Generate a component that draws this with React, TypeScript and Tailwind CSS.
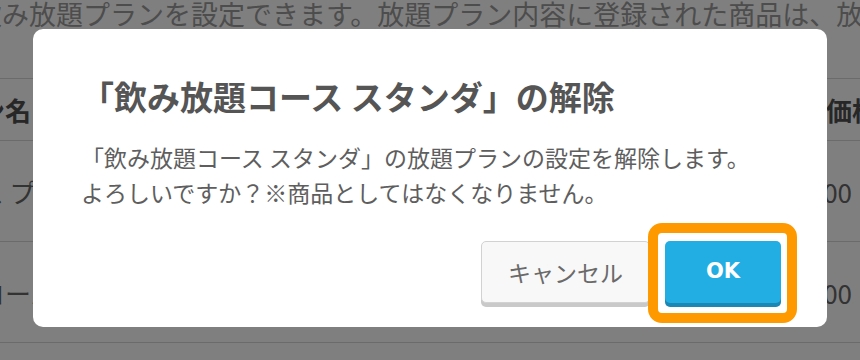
export default function App() {
  const rows = [
    { name: "特選コース プレミアム", price: "3,000" },
    { name: "飲み放題コース スタンダード", price: "2,000" },
  ];
  return (
    <div className="relative w-[860px] h-[360px] overflow-hidden bg-white font-['Noto_Sans_CJK_JP','Noto_Sans',sans-serif]">
      {/* underlying page */}
      <div className="flex flex-col">
        <p className="-ml-[25px] whitespace-nowrap text-[27px] leading-[28px] text-[#9a9a9a]">
          飲み放題プランを設定できます。放題プラン内容に登録された商品は、放題プランの注文時に選択できます。
        </p>
        <div className="mt-[50px] -ml-[125px] w-[985px] flex flex-col border-t border-[#d6d6d6]">
          <div className="flex h-[62px] items-center border-b border-[#d6d6d6] text-[26px] font-bold text-[#4e4e4e]">
            <div className="flex-1 whitespace-nowrap">放題プラン名</div>
            <div className="w-[34px] whitespace-nowrap">価格（税込）</div>
          </div>
          {rows.map((r) => (
            <div
              key={r.name}
              className="flex h-[101px] items-center border-b border-[#d6d6d6] text-[26px] text-[#666]"
            >
              <div className="flex-1 whitespace-nowrap">{r.name}</div>
              <div className="w-[34px] flex justify-end pr-[8px] whitespace-nowrap">{r.price}</div>
            </div>
          ))}
        </div>
      </div>

      {/* overlay */}
      <div className="absolute inset-0 bg-black/50" />

      {/* modal */}
      <div className="absolute left-[33px] top-[29px] w-[794px] h-[298px] rounded-[10px] bg-white pl-[48px] pr-[46px] pt-[43px] flex flex-col">
        <h2 className="text-[33px] leading-[48px] font-bold text-[#555] whitespace-nowrap">
          「飲み放題コース スタンダ」の解除
        </h2>
        <p className="mt-[20px] text-[23px] leading-[35px] text-[#5e5e5e] whitespace-nowrap">
          「飲み放題コース スタンダ」の放題プランの設定を解除します。
          <br />
          よろしいですか？※商品としてはなくなりません。
        </p>
        <div className="mt-[31px] flex justify-end gap-[15px]">
          <button className="w-[169px] h-[62px] rounded-[5px] border border-[#d2d2d2] bg-[#f8f8f8] shadow-[0_4px_0_#c9c9c9] text-[23px] text-[#6a6a6a] flex items-center justify-center">
            キャンセル
          </button>
          <div className="relative">
            <button className="w-[116px] h-[62px] rounded-[5px] bg-[#22ade3] shadow-[0_4px_0_#1a87b4] text-white text-[21px] font-bold font-['DejaVu_Sans',sans-serif] flex items-center justify-center">
              OK
            </button>
            <span className="pointer-events-none absolute -left-[17px] -right-[16px] -top-[18px] -bottom-[20px] rounded-[14px] border-[10px] border-[#ff9900]" />
          </div>
        </div>
      </div>
    </div>
  );
}
